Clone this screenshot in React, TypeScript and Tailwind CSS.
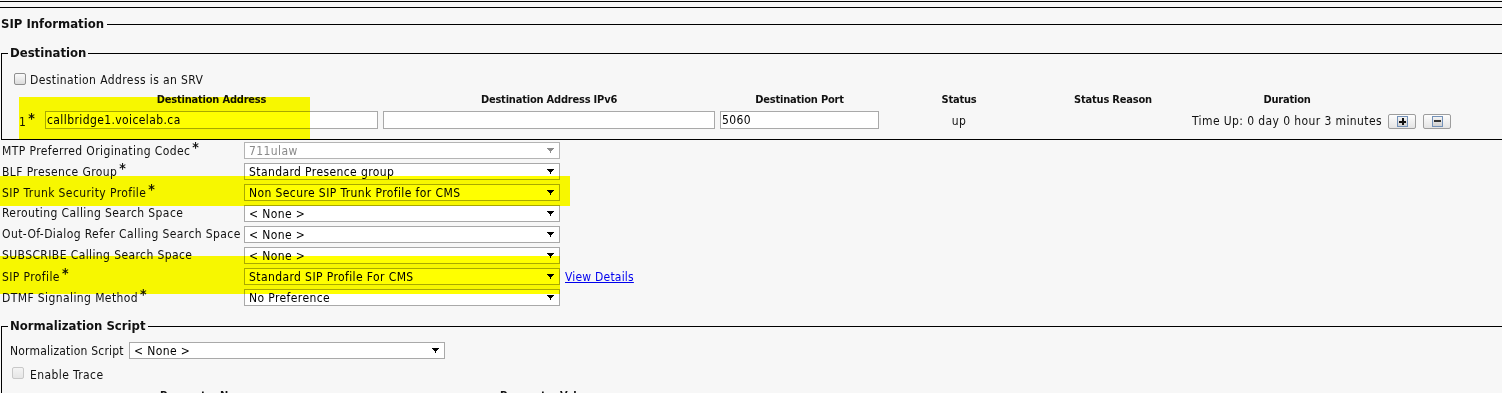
import React from 'react';

function Arrow({ disabled }: { disabled?: boolean }) {
  return (
    <svg width="7" height="5" viewBox="0 0 7 5" shapeRendering="crispEdges">
      <path
        d="M0 0h7v1h-1v1h-1v1h-1v2h-1v-2h-1v-1h-1v-1h-1z"
        fill={disabled ? '#8c8c8c' : '#000'}
      />
    </svg>
  );
}

function Select({ value, disabled }: { value: string; disabled?: boolean }) {
  return (
    <div
      className={
        'w-[316px] h-[17px] flex items-center justify-between border bg-white pl-[4px] pr-[5px] leading-[15px] ' +
        (disabled ? 'border-[#b4b4b4] text-[#8a8a8a]' : 'border-[#a9a9a9] text-black')
      }
    >
      <span className="pt-px">{value}</span>
      <Arrow disabled={disabled} />
    </div>
  );
}

function Checkbox({ disabled }: { disabled?: boolean }) {
  return (
    <div
      className={
        'w-[12px] h-[12px] rounded-[2px] border bg-gradient-to-b ' +
        (disabled
          ? 'border-[#c8c8c8] from-[#f4f4f4] to-[#e6e6e6]'
          : 'border-[#8f8f8f] from-[#fafafa] to-[#dcdcdc]')
      }
    />
  );
}

function Req() {
  return <span className="relative -top-[3px] ml-[2px] text-[14px] font-bold">*</span>;
}

function Legend({ title }: { title: string }) {
  return (
    <div className="-mt-[7px] h-[14px] flex items-center">
      <div className="w-[6px] h-px bg-black" />
      <span className="px-[2px] font-bold text-[13px] leading-[14px] tracking-normal">{title}</span>
      <div className="flex-1 h-px bg-black" />
    </div>
  );
}

function RowButton({ minus }: { minus?: boolean }) {
  return (
    <div className="w-[28px] h-[15px] rounded-[2px] border border-[#9d9d9d] bg-gradient-to-b from-[#fdfdfd] to-[#e4e4e4] flex items-center justify-center">
      <div className="w-[11px] h-[11px] border border-[#7391b8] bg-gradient-to-b from-[#f4f4f4] to-[#cfcfcf] flex items-center justify-center">
        {minus ? (
          <div className="w-[7px] h-[2px] bg-[#333]" />
        ) : (
          <svg width="7" height="7" viewBox="0 0 7 7" shapeRendering="crispEdges">
            <path d="M2.5 0h2v2.5h2.5v2h-2.5v2.5h-2v-2.5h-2.5v-2h2.5z" fill="#111" />
          </svg>
        )}
      </div>
    </div>
  );
}

const rows: { label: string; req?: boolean; value: string; disabled?: boolean; link?: boolean }[] = [
  { label: 'MTP Preferred Originating Codec', req: true, value: '711ulaw', disabled: true },
  { label: 'BLF Presence Group', req: true, value: 'Standard Presence group' },
  { label: 'SIP Trunk Security Profile', req: true, value: 'Non Secure SIP Trunk Profile for CMS' },
  { label: 'Rerouting Calling Search Space', value: '< None >' },
  { label: 'Out-Of-Dialog Refer Calling Search Space', value: '< None >' },
  { label: 'SUBSCRIBE Calling Search Space', value: '< None >' },
  { label: 'SIP Profile', req: true, value: 'Standard SIP Profile For CMS', link: true },
  { label: 'DTMF Signaling Method', req: true, value: 'No Preference' },
];

export default function App() {
  return (
    <div className="relative w-[1502px] h-[393px] overflow-hidden bg-[#f7f7f7] text-[12px] leading-[14px] tracking-[0.4px] text-[#111] font-['DejaVu_Sans_Condensed','DejaVu_Sans',sans-serif]">
      {/* top rules */}
      <div className="h-px" />
      <div className="h-[6px] border-t border-black" />
      <div className="border-t border-black" />

      {/* SIP Information */}
      <div className="mt-[9px] h-[14px] flex items-center">
        <span className="pl-px pr-[3px] font-bold text-[13px] leading-[14px] tracking-normal">SIP Information</span>
        <div className="flex-1 h-px bg-black" />
      </div>

      {/* Destination */}
      <div className="mt-[22px] ml-px h-[87px] w-[1560px] flex flex-col border-l border-b border-black">
        <Legend title="Destination" />
        <div className="mt-[12px] h-[14px] flex items-center">
          <div className="ml-[12px]">
            <Checkbox />
          </div>
          <span className="ml-[4px] pt-px">Destination Address is an SRV</span>
        </div>

        <div className="mt-[8px] h-[12px] flex items-center font-bold text-[11px] leading-[12px] tracking-[-0.2px]">
          <div className="ml-[43px] w-[333px] text-center">Destination Address</div>
          <div className="ml-[5px] w-[332px] text-center">Destination Address IPv6</div>
          <div className="ml-[5px] w-[159px] text-center">Destination Port</div>
          <div className="w-[160px] text-center">Status</div>
          <div className="w-[148px] text-center">Status Reason</div>
          <div className="w-[200px] text-center">Duration</div>
        </div>

        <div className="mt-[5px] h-[18px] flex items-center">
          <div className="ml-[17px] w-[26px] pt-[2px]">
            1<Req />
          </div>
          <div className="w-[333px] h-[18px] border border-[#a9a9a9] bg-white pl-px leading-[17px] text-black">
            callbridge1.voicelab.ca
          </div>
          <div className="ml-[5px] w-[332px] h-[18px] border border-[#a9a9a9] bg-white" />
          <div className="ml-[5px] w-[159px] h-[18px] border border-[#a9a9a9] bg-white pl-px leading-[17px] text-black">
            5060
          </div>
          <div className="w-[160px] text-center pt-px">up</div>
          <div className="w-[148px]" />
          <div className="w-[200px] text-center pt-px">Time Up: 0 day 0 hour 3 minutes</div>
          <div className="ml-px mt-[2px] flex gap-[7px]">
            <RowButton />
            <RowButton minus />
          </div>
        </div>
      </div>

      {/* form rows */}
      <div className="flex flex-col">
        {rows.map((r) => (
          <div key={r.label} className="h-[21px] flex items-center">
            <div className="w-[244px] pl-[2px] self-start pt-[3px] whitespace-nowrap">
              {r.label}
              {r.req && <Req />}
            </div>
            <Select value={r.value} disabled={r.disabled} />
            {r.link && (
              <a href="#" className="ml-[5px] pt-px text-[#0000ee] underline tracking-[0.2px]">
                View Details
              </a>
            )}
          </div>
        ))}
      </div>

      {/* Normalization Script */}
      <div className="mt-[18px] ml-px h-[120px] flex flex-col border-l border-black">
        <Legend title="Normalization Script" />
        <div className="mt-[9px] h-[17px] flex items-center">
          <div className="w-[127px] pl-[8px] whitespace-nowrap tracking-[0.2px]">Normalization Script</div>
          <Select value="< None >" />
        </div>
        <div className="mt-[7px] h-[14px] flex items-center">
          <div className="ml-[10px]">
            <Checkbox disabled />
          </div>
          <span className="ml-[6px] pt-[3px]">Enable Trace</span>
        </div>
        <div className="mt-[10px] h-[12px] flex font-bold text-[11px] leading-[12px] tracking-[-0.2px]">
          <div className="ml-[158px] w-[340px]">Parameter Name</div>
          <div>Parameter Value</div>
        </div>
      </div>

      {/* highlighter marks */}
      <div className="absolute left-[19px] top-[97px] w-[291px] h-[42px] bg-[#ffff00] mix-blend-multiply" />
      <div className="absolute left-0 top-[176px] w-[570px] h-[30px] bg-[#ffff00] mix-blend-multiply" />
      <div className="absolute left-0 top-[256px] w-[560px] h-[38px] bg-[#ffff00] mix-blend-multiply" />
    </div>
  );
}
